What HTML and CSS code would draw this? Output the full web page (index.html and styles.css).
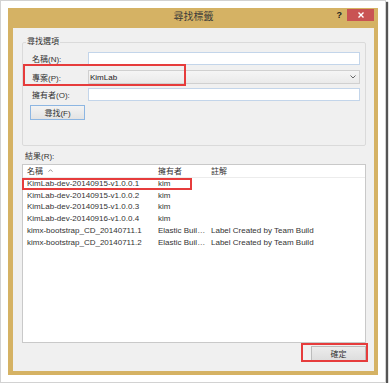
FILE: index.html
```html
<!DOCTYPE html>
<html lang="zh-Hant">
<head>
  <meta charset="UTF-8">
  <title>尋找標籤</title>
  <link rel="stylesheet" href="styles.css">
</head>
<body>
  <div class="shot">
    <div class="dialog">
      <!-- title bar -->
      <div class="titlebar">
        <span></span>
        <span class="title">尋找標籤</span>
        <div class="caption-btns">
          <span class="help">?</span>
          <span class="close">
            <svg width="6" height="6" viewBox="0 0 6 6"><path d="M0.5 0.5 L5.5 5.5 M5.5 0.5 L0.5 5.5" stroke="#fff" stroke-width="1.4"/></svg>
          </span>
        </div>
      </div>

      <div class="client">
        <fieldset class="options">
          <legend>尋找選項</legend>
          <div class="fields">
            <div class="field">
              <label>名稱(N):</label>
              <div class="textbox"></div>
            </div>
            <div class="field project">
              <label>專案(P):</label>
              <div class="combo">
                <span>KimLab</span>
                <svg width="6" height="4" viewBox="0 0 6 4"><path d="M0.5 0.5 L3 3 L5.5 0.5" fill="none" stroke="#666" stroke-width="1"/></svg>
              </div>
              <span class="mark mark-project"></span>
            </div>
            <div class="field owner">
              <label>擁有者(O):</label>
              <div class="textbox"></div>
            </div>
            <button class="find-btn">尋找(F)</button>
          </div>
        </fieldset>

        <div class="results-label">結果(R):</div>
        <div class="results">
          <table>
            <colgroup>
              <col class="c-name">
              <col class="c-owner">
              <col>
            </colgroup>
            <thead>
              <tr>
                <th>名稱 <svg class="sort" width="5" height="3" viewBox="0 0 5 3"><path d="M0.5 2.7 L2.5 0.7 L4.5 2.7" fill="none" stroke="#888" stroke-width="0.9"/></svg></th>
                <th>擁有者</th>
                <th>註解</th>
              </tr>
            </thead>
            <tbody>
              <tr><td class="first">KimLab-dev-20140915-v1.0.0.1<span class="mark mark-row"></span></td><td>kim</td><td></td></tr>
              <tr><td>KimLab-dev-20140915-v1.0.0.2</td><td>kim</td><td></td></tr>
              <tr><td>KimLab-dev-20140915-v1.0.0.3</td><td>kim</td><td></td></tr>
              <tr><td>KimLab-dev-20140916-v1.0.0.4</td><td>kim</td><td></td></tr>
              <tr><td>kimx-bootstrap_CD_20140711.1</td><td>Elastic Buil…</td><td>Label Created by Team Build</td></tr>
              <tr><td>kimx-bootstrap_CD_20140711.2</td><td>Elastic Buil…</td><td>Label Created by Team Build</td></tr>
            </tbody>
          </table>
        </div>

        <div class="footer">
          <div class="ok-wrap">
            <button class="ok-btn">確定</button>
            <span class="mark mark-ok"></span>
          </div>
        </div>
      </div>
    </div>
  </div>
</body>
</html>
```
FILE: styles.css
```css
body {
  margin: 0;
  background: #fff;
  font-family: "Liberation Sans", "Noto Sans CJK TC", sans-serif;
  font-size: 8px;
  color: #333;
}

/* screenshot frame with drop shadow */
.shot {
  width: 370px;
  height: 367px;
  padding: 7px;
  border: 1px solid #d2d2d2;
  box-shadow: 2px 2px 1px #555;
}

.dialog {
  width: 370px;
  height: 367px;
  box-sizing: border-box;
  padding: 0 4px 4px 5px;
  background: #d5b264;
  display: flex;
  flex-direction: column;
}

.titlebar {
  height: 20px;
  flex: none;
  display: grid;
  grid-template-columns: 1fr auto 1fr;
  align-items: start;
}

.title {
  font-size: 10px;
  line-height: 18px;
  color: #3a3a3a;
}

.caption-btns {
  justify-self: end;
  display: flex;
  align-items: flex-start;
}

.help {
  font-weight: bold;
  font-size: 9px;
  line-height: 14px;
  color: #222;
  margin-right: 5px;
}

.close {
  width: 27px;
  height: 12px;
  margin-top: 1px;
  background: #c95353;
  display: flex;
  align-items: center;
  justify-content: center;
}

.client {
  flex: 1;
  background: #f0f0f0;
  padding: 0 8px 0 9px;
  display: flex;
  flex-direction: column;
}

/* search options group */
.options {
  margin: 9px 0 0;
  padding: 0 5px 25px 3px;
  border: 1px solid #dadada;
  border-radius: 2px;
  min-width: 0;
}

.options legend {
  padding: 0 1px;
  line-height: 10px;
}

.fields {
  padding: 5px 0 0 6px;
}

.field {
  position: relative;
  display: flex;
  align-items: center;
  height: 13px;
}

.field label {
  width: 56px;
  flex: none;
}

.field.project {
  height: 14px;
  margin-top: 5px;
}

.field.owner {
  margin-top: 4px;
}

.textbox {
  flex: 1;
  height: 100%;
  box-sizing: border-box;
  border: 1px solid #c3d5ea;
  background: #fff;
}

.combo {
  flex: 1;
  height: 100%;
  box-sizing: border-box;
  border: 1px solid #d0d0d0;
  background: linear-gradient(#f5f5f5, #eaeaea);
  display: flex;
  align-items: center;
  justify-content: space-between;
  padding: 0 3px 0 1px;
  color: #222;
}

.find-btn {
  display: block;
  margin: 4px 0 0 -2px;
  width: 55px;
  height: 15px;
  padding: 0;
  border: 1px solid #8db6e2;
  background: linear-gradient(#f3f3f3, #e3e3e3);
  font: inherit;
  color: #333;
}

/* results list */
.results-label {
  margin: 6px 0 0 3px;
  line-height: 10px;
}

.results {
  margin-top: 2px;
  height: 179px;
  box-sizing: border-box;
  border: 1px solid #c9c9c9;
  background: #fff;
}

.results table {
  width: 100%;
  border-collapse: collapse;
  table-layout: fixed;
}

.c-name { width: 131px; }
.c-owner { width: 53px; }

.results th,
.results td {
  padding: 0 0 0 4px;
  text-align: left;
  font-weight: normal;
  white-space: nowrap;
  color: #333;
}

.results th {
  padding-top: 1px;
  line-height: 11px;
  border-bottom: 1px solid #ececec;
}

.results td {
  line-height: 11.7px;
}

.results td.first {
  position: relative;
}

.sort {
  margin-left: 3px;
  vertical-align: 2px;
}

.footer {
  display: flex;
  justify-content: flex-end;
  margin-top: 3px;
}

.ok-wrap {
  position: relative;
}

.ok-btn {
  display: block;
  width: 55px;
  height: 15px;
  padding: 0;
  border: 1px solid #bcbcbc;
  background: linear-gradient(#ececec, #dedede);
  font: inherit;
  color: #333;
}

/* red annotation boxes drawn over the screenshot */
.mark {
  position: absolute;
  box-sizing: border-box;
  border: 2px solid #e63c3c;
}

.mark-project {
  left: -9px;
  top: -6px;
  width: 163px;
  height: 22px;
}

.mark-row {
  left: -1px;
  top: 0;
  width: 170px;
  height: 12px;
}

.mark-ok {
  left: -10px;
  right: -2px;
  top: -3px;
  bottom: -1px;
}
```
